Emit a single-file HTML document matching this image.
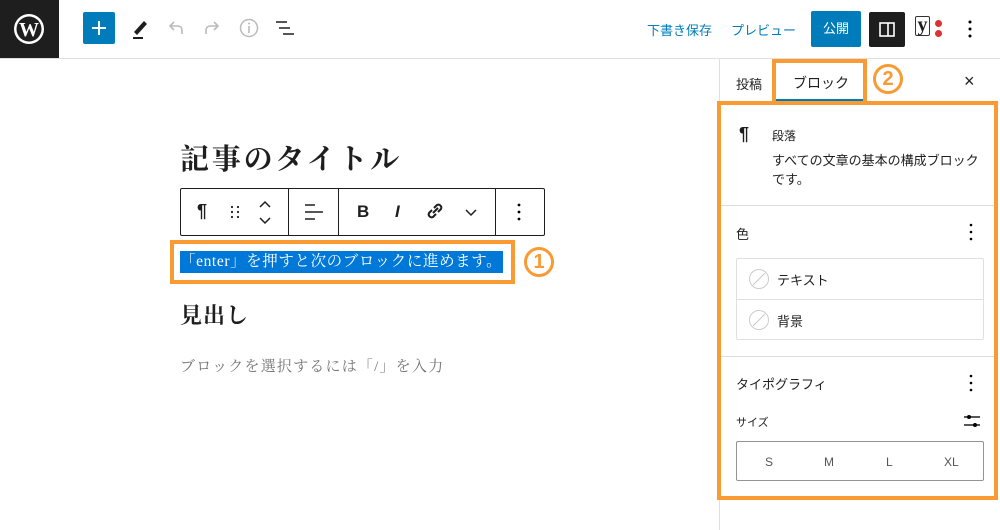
<!DOCTYPE html>
<html><head><meta charset="utf-8"><style>
*{margin:0;padding:0;box-sizing:border-box}
body{width:1000px;height:530px;background:#fff;font-family:"Liberation Sans","Noto Sans CJK JP",sans-serif;position:relative;overflow:hidden;color:#1e1e1e}
.a{position:absolute}
.serif{font-family:"Liberation Serif","Noto Serif CJK SC",serif}
.org{border:4px solid #f99a32}
.num{width:30px;height:30px;border:3px solid #f99a32;border-radius:50%;color:#f99a32;font-weight:bold;font-size:20px;text-align:center;line-height:24px}
</style></head><body>
<!-- header -->
<div class="a" style="left:0;top:0;width:59px;height:58px;background:#1e1e1e"></div>
<svg class="a" style="left:13px;top:13px" width="32" height="32" viewBox="0 0 32 32"><circle cx="16" cy="16" r="15" fill="#fff"/><circle cx="16" cy="16" r="12.5" fill="#1e1e1e"/><text x="16" y="23" text-anchor="middle" font-family="Liberation Serif" font-weight="bold" font-size="20" fill="#fff">W</text></svg>
<div class="a" style="left:0;top:58px;width:1000px;height:1px;background:#e0e0e0"></div>
<div class="a" style="left:83px;top:12px;width:32px;height:32px;background:#007cba;border-radius:2px"></div>
<svg class="a" style="left:83px;top:12px" width="32" height="32"><path d="M16 9v14M9 16h14" stroke="#fff" stroke-width="2"/></svg>
<svg class="a" style="left:130px;top:16px" width="20" height="24"><path d="M4 16l10-11 3 3-10 11z" fill="#1e1e1e"/><path d="M3 22h10" stroke="#1e1e1e" stroke-width="2"/></svg>
<svg class="a" style="left:166px;top:18px" width="24" height="20"><path d="M16 16v-4a4 4 0 0 0-4-4H4M8 4L4 8l4 4" stroke="#bbb" stroke-width="1.6" fill="none"/></svg>
<svg class="a" style="left:200px;top:18px" width="24" height="20"><path d="M6 16v-4a4 4 0 0 1 4-4h8M14 4l4 4-4 4" stroke="#bbb" stroke-width="1.6" fill="none"/></svg>
<svg class="a" style="left:238px;top:17px" width="22" height="22"><circle cx="11" cy="11" r="8.5" stroke="#bbb" stroke-width="1.5" fill="none"/><path d="M11 9v7" stroke="#bbb" stroke-width="1.6"/><circle cx="11" cy="6.5" r="1" fill="#bbb"/></svg>
<svg class="a" style="left:274px;top:18px" width="22" height="20"><path d="M2 4h11M5 10h11M9 16h11" stroke="#1e1e1e" stroke-width="1.6"/></svg>
<div class="a" style="left:647px;top:20px;font-size:13px;color:#007cba">下書き保存</div>
<div class="a" style="left:731px;top:20px;font-size:13px;color:#007cba">プレビュー</div>
<div class="a" style="left:811px;top:11px;width:50px;height:36px;background:#007cba;border-radius:2px;color:#fff;font-size:13px;text-align:center;line-height:36px">公開</div>
<div class="a" style="left:869px;top:12px;width:36px;height:35px;background:#1e1e1e;border-radius:2px"></div>
<svg class="a" style="left:869px;top:12px" width="36" height="35"><rect x="11" y="11" width="14" height="13" stroke="#fff" stroke-width="1.6" fill="none"/><path d="M19 11v13" stroke="#fff" stroke-width="1.6"/></svg>
<div class="a" style="left:915px;top:16px;font-size:20px;font-weight:bold;font-family:'Liberation Serif',serif;border:1.5px solid #333;width:15px;height:20px;line-height:16px;text-align:center;border-radius:2px">y</div>
<div class="a" style="left:935px;top:20px;width:7px;height:7px;border-radius:50%;background:#dc3232"></div>
<div class="a" style="left:935px;top:30px;width:7px;height:7px;border-radius:50%;background:#dc3232"></div>
<svg class="a" style="left:962px;top:18px" width="16" height="22"><circle cx="8" cy="4" r="1.5"/><circle cx="8" cy="11" r="1.5"/><circle cx="8" cy="18" r="1.5"/></svg>

<!-- editor -->
<div class="a serif" style="left:180px;top:137px;font-size:29px;font-weight:bold;letter-spacing:2.8px">記事のタイトル</div>
<div class="a" style="left:180px;top:188px;width:365px;height:48px;border:1px solid #1e1e1e;border-radius:2px"></div>
<div class="a" style="left:288px;top:189px;width:1px;height:46px;background:#1e1e1e"></div>
<div class="a" style="left:338px;top:189px;width:1px;height:46px;background:#1e1e1e"></div>
<div class="a" style="left:495px;top:189px;width:1px;height:46px;background:#1e1e1e"></div>
<div class="a" style="left:197px;top:201px;font-size:18px;font-weight:bold">¶</div>
<svg class="a" style="left:228px;top:204px" width="14" height="16"><g fill="#1e1e1e"><circle cx="4" cy="3" r="1.1"/><circle cx="10" cy="3" r="1.1"/><circle cx="4" cy="8" r="1.1"/><circle cx="10" cy="8" r="1.1"/><circle cx="4" cy="13" r="1.1"/><circle cx="10" cy="13" r="1.1"/></g></svg>
<svg class="a" style="left:257px;top:200px" width="16" height="26"><path d="M3 7l5-5 5 5M3 18l5 5 5-5" stroke="#1e1e1e" stroke-width="1.5" fill="none"/></svg>
<svg class="a" style="left:304px;top:202px" width="20" height="20"><path d="M1 3h10M1 10h18M1 17h10" stroke="#1e1e1e" stroke-width="1.6"/></svg>
<div class="a" style="left:357px;top:202px;font-size:17px;font-weight:bold">B</div>
<div class="a" style="left:395px;top:202px;font-size:17px;font-style:italic;font-weight:bold">I</div>
<svg class="a" style="left:425px;top:201px" width="20" height="20"><path d="M8 12l5-5M7 9l-3 3a3 3 0 0 0 4 4l3-3M13 11l3-3a3 3 0 0 0-4-4l-3 3" stroke="#1e1e1e" stroke-width="2" fill="none"/></svg>
<svg class="a" style="left:464px;top:206px" width="14" height="12"><path d="M2 4l5 5 5-5" stroke="#1e1e1e" stroke-width="1.5" fill="none"/></svg>
<svg class="a" style="left:512px;top:201px" width="14" height="22"><circle cx="7" cy="4" r="1.4"/><circle cx="7" cy="11" r="1.4"/><circle cx="7" cy="18" r="1.4"/></svg>
<div class="a org" style="left:170px;top:240px;width:345px;height:44px"></div>
<div class="a serif" style="left:180px;top:251px;width:323px;height:22px;background:#0078d7;color:#fff;font-size:15.5px;line-height:22px;white-space:nowrap;letter-spacing:0.6px">「enter」を押すと次のブロックに進めます。</div>
<div class="a num" style="left:524px;top:247px">1</div>
<div class="a serif" style="left:180px;top:299px;font-size:22px;font-weight:bold;letter-spacing:1px">見出し</div>
<div class="a serif" style="left:180px;top:355px;font-size:15px;color:#757575;letter-spacing:1.2px">ブロックを選択するには「/」を入力</div>

<!-- sidebar -->
<div class="a" style="left:719px;top:59px;width:1px;height:471px;background:#e0e0e0"></div>
<div class="a" style="left:736px;top:74px;font-size:13px">投稿</div>
<div class="a org" style="left:772px;top:59px;width:95px;height:45px"></div>
<div class="a" style="left:776px;top:99px;width:87px;height:4px;background:#007cba"></div>
<div class="a" style="left:793px;top:73px;font-size:14px">ブロック</div>
<div class="a num" style="left:873px;top:64px">2</div>
<div class="a" style="left:964px;top:71px;font-size:18px">×</div>
<div class="a org" style="left:717px;top:101px;width:281px;height:399px"></div>
<div class="a" style="left:739px;top:124px;font-size:18px;font-weight:bold">¶</div>
<div class="a" style="left:772px;top:127px;font-size:12px">段落</div>
<div class="a" style="left:772px;top:151px;font-size:13px;line-height:19px;width:215px">すべての文章の基本の構成ブロックです。</div>
<div class="a" style="left:721px;top:205px;width:273px;height:1px;background:#ddd"></div>
<div class="a" style="left:736px;top:224px;font-size:13px">色</div>
<svg class="a" style="left:964px;top:222px" width="14" height="20"><circle cx="7" cy="3" r="1.3"/><circle cx="7" cy="10" r="1.3"/><circle cx="7" cy="17" r="1.3"/></svg>
<div class="a" style="left:736px;top:258px;width:248px;height:82px;border:1px solid #e0e0e0;border-radius:2px"></div>
<div class="a" style="left:737px;top:299px;width:246px;height:1px;background:#e0e0e0"></div>
<svg class="a" style="left:748px;top:268px" width="22" height="22"><circle cx="11" cy="11" r="9.5" stroke="#ccc" fill="none"/><path d="M5 17L17 5" stroke="#ccc"/></svg>
<svg class="a" style="left:748px;top:309px" width="22" height="22"><circle cx="11" cy="11" r="9.5" stroke="#ccc" fill="none"/><path d="M5 17L17 5" stroke="#ccc"/></svg>
<div class="a" style="left:777px;top:270px;font-size:13px">テキスト</div>
<div class="a" style="left:777px;top:311px;font-size:13px">背景</div>
<div class="a" style="left:721px;top:356px;width:273px;height:1px;background:#ddd"></div>
<div class="a" style="left:736px;top:374px;font-size:13px">タイポグラフィ</div>
<svg class="a" style="left:964px;top:373px" width="14" height="20"><circle cx="7" cy="3" r="1.3"/><circle cx="7" cy="10" r="1.3"/><circle cx="7" cy="17" r="1.3"/></svg>
<div class="a" style="left:736px;top:414px;font-size:11px">サイズ</div>
<svg class="a" style="left:963px;top:412px" width="18" height="18"><path d="M1 5h16M1 13h16" stroke="#1e1e1e" stroke-width="1.5"/><circle cx="6" cy="5" r="2"/><circle cx="12" cy="13" r="2"/></svg>
<div class="a" style="left:736px;top:441px;width:248px;height:40px;border:1px solid #949494;border-radius:2px"></div>
<div class="a" style="left:765px;top:455px;font-size:12px;color:#555">S</div>
<div class="a" style="left:824px;top:455px;font-size:12px;color:#555">M</div>
<div class="a" style="left:886px;top:455px;font-size:12px;color:#555">L</div>
<div class="a" style="left:944px;top:455px;font-size:12px;color:#555">XL</div>
</body></html>
